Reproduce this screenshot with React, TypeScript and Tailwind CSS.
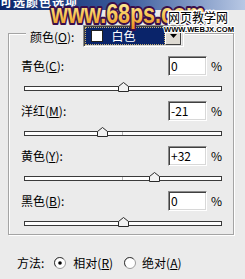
import React from "react";

const rows = [
  { label: "青色", key: "C", value: "0", v: 0 },
  { label: "洋红", key: "M", value: "-21", v: -21 },
  { label: "黄色", key: "Y", value: "+32", v: 32 },
  { label: "黑色", key: "B", value: "0", v: 0 },
];

function U({ children }: { children: React.ReactNode }) {
  return <span className="underline underline-offset-[1px] decoration-1">{children}</span>;
}

function Thumb() {
  return (
    <svg width="11" height="10" viewBox="0 0 11 10">
      <path d="M5.5 0.5 L10.5 4.5 L10.5 9.5 L0.5 9.5 L0.5 4.5 Z" fill="#f2f2f2" stroke="#2a2a2a" strokeLinejoin="miter" />
    </svg>
  );
}

function Radio({ checked }: { checked: boolean }) {
  return (
    <svg width="12" height="12" viewBox="0 0 12 12">
      <circle cx="6" cy="6" r="5.5" fill="#ffffff" stroke="#9a9a9a" />
      <path d="M2 9.5 A5 5 0 0 1 9.5 2" fill="none" stroke="#404040" strokeWidth="1" />
      {checked && <circle cx="6" cy="6" r="1.8" fill="#000" />}
    </svg>
  );
}

function Slider({ v }: { v: number }) {
  const frac = (v + 100) / 200;
  const center = frac * 197;
  return (
    <div className="relative ml-[15px] mt-[10px] h-[5px] w-[198px] border border-[#3a3a3a] bg-white">
      <div className="absolute left-[97px] top-0 h-[3px] w-px bg-[#b8b8b8]" />
      <div className="absolute top-[-5px] flex" style={{ left: `${Math.round(center - 6)}px` }}>
        <Thumb />
      </div>
    </div>
  );
}

function Row({ r }: { r: (typeof rows)[number] }) {
  return (
    <div className="flex flex-col">
      <div className="flex h-[20px] items-center">
        <div className="w-[159px] pl-[12px] leading-[14px]">
          {r.label}(<U>{r.key}</U>):
        </div>
        <div className="flex h-[20px] w-[39px] items-center border border-b-white border-l-[#8a8a8a] border-r-white border-t-[#8a8a8a] bg-white pl-[2px] leading-[14px] shadow-[inset_1px_1px_0_#404040,inset_-1px_-1px_0_#d8d8d8]">
          {r.value}
        </div>
        <div className="ml-[4px] leading-[14px]">%</div>
      </div>
      <Slider v={r.v} />
    </div>
  );
}

export default function App() {
  return (
    <div className="relative h-[279px] w-[245px] overflow-hidden bg-[#ebebeb] font-['Noto_Sans_CJK_SC',sans-serif] text-[12px] text-black">
      <div className="h-[10px] overflow-hidden bg-gradient-to-r from-[#0a246a] via-[#3a5a9a] to-[#b8c8e4]">
        <div className="-mt-[5px] whitespace-nowrap pl-[0px] text-[12px] font-bold leading-[14px] tracking-[1px] text-white">
          可选颜色选项
        </div>
      </div>

      <div className="ml-[8px] mt-[23px] w-[226px] border border-[#a4a4a4] pb-[8px] shadow-[1px_1px_0_#ffffff,inset_1px_1px_0_#ffffff]">
        <div className="-mt-[9px] ml-[17px] flex w-fit items-center bg-[#ebebeb] pl-[4px] pr-[1px]">
          <div className="mt-[2px] leading-[14px]">
            颜色(<U>O</U>):
          </div>
          <div className="ml-[9px] flex h-[22px] w-[101px] border border-b-white border-l-[#8a8a8a] border-r-white border-t-[#8a8a8a] shadow-[inset_1px_1px_0_#404040,inset_-1px_-1px_0_#d8d8d8]">
            <div className="ml-[1px] mt-[1px] flex h-[18px] w-[80px] items-center border border-dotted border-[#c8b070] bg-[#0a246a]">
              <div className="ml-[5px] h-[12px] w-[12px] border border-[#202020] bg-white" />
              <span className="ml-[8px] leading-[14px] text-white">白色</span>
            </div>
            <div className="mt-[1px] flex h-[18px] w-[16px] items-center justify-center border border-b-[#404040] border-l-white border-r-[#404040] border-t-white bg-[#dedad2]">
              <svg width="7" height="4" viewBox="0 0 7 4">
                <path d="M0 0 H7 L3.5 4 Z" fill="#000" />
              </svg>
            </div>
          </div>
        </div>

        <div className="mt-[9px] flex flex-col gap-[10px]">
          {rows.map((r) => (
            <Row key={r.key} r={r} />
          ))}
        </div>
      </div>

      <div className="ml-[17px] mt-[20px] flex h-[16px] items-center leading-[14px]">
        <span>方法:</span>
        <span className="ml-[10px] flex">
          <Radio checked />
        </span>
        <span className="ml-[7px]">
          相对(<U>R</U>)
        </span>
        <span className="ml-[11px] flex">
          <Radio checked={false} />
        </span>
        <span className="ml-[6px]">
          绝对(<U>A</U>)
        </span>
      </div>

      <svg className="pointer-events-none absolute left-0 top-0" width="245" height="36" viewBox="0 0 245 36">
        <defs>
          <linearGradient id="wm" x1="0" y1="0" x2="0" y2="1">
            <stop offset="0" stopColor="#fff6b0" />
            <stop offset="0.55" stopColor="#f7c550" />
            <stop offset="1" stopColor="#e88a20" />
          </linearGradient>
        </defs>
        <text
          x="51"
          y="23"
          fontSize="27"
          fontWeight="bold"
          fontFamily="'Liberation Sans', Arial, sans-serif"
          textLength="154"
          lengthAdjust="spacingAndGlyphs"
          fill="url(#wm)"
          stroke="#3a0e4a"
          strokeWidth="4"
          strokeLinejoin="round"
          paintOrder="stroke"
        >
          www.68ps.com
        </text>
        <text
          x="168"
          y="22"
          fontSize="13"
          fontFamily="'Noto Sans CJK SC', sans-serif"
          textLength="60"
          lengthAdjust="spacingAndGlyphs"
          fill="#000"
          stroke="#fff"
          strokeWidth="3"
          strokeLinejoin="round"
          paintOrder="stroke"
        >
          网页教学网
        </text>
        <text
          x="164"
          y="31.5"
          fontSize="7.5"
          fontWeight="bold"
          fontFamily="'Liberation Sans', Arial, sans-serif"
          textLength="70"
          lengthAdjust="spacingAndGlyphs"
          fill="#000"
          stroke="#fff"
          strokeWidth="2"
          strokeLinejoin="round"
          paintOrder="stroke"
        >
          WWW.WEBJX.COM
        </text>
      </svg>
    </div>
  );
}
